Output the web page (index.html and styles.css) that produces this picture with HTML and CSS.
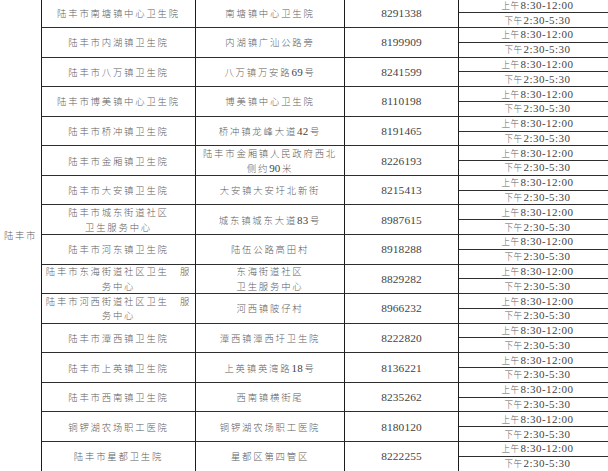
FILE: index.html
```html
<!DOCTYPE html>
<html lang="zh-CN">
<head>
<meta charset="utf-8">
<title>陆丰市卫生院</title>
<link rel="stylesheet" href="styles.css">
</head>
<body>
<div class="sheet">
  <div class="cell city"><span class="t">陆丰市</span></div>

  <div class="cell name"><span class="t">陆丰市南塘镇中心卫生院</span></div>
  <div class="cell addr"><span class="t">南塘镇中心卫生院</span></div>
  <div class="cell tel"><span class="t">8291338</span></div>
  <div class="cell am"><span class="t"><span class="cn">上午</span>8:30-12:00</span></div>
  <div class="cell pm"><span class="t"><span class="cn">下午</span>2:30-5:30</span></div>

  <div class="cell name"><span class="t">陆丰市内湖镇卫生院</span></div>
  <div class="cell addr"><span class="t">内湖镇广汕公路旁</span></div>
  <div class="cell tel"><span class="t">8199909</span></div>
  <div class="cell am"><span class="t"><span class="cn">上午</span>8:30-12:00</span></div>
  <div class="cell pm"><span class="t"><span class="cn">下午</span>2:30-5:30</span></div>

  <div class="cell name"><span class="t">陆丰市八万镇卫生院</span></div>
  <div class="cell addr"><span class="t">八万镇万安路<span class="num">69</span>号</span></div>
  <div class="cell tel"><span class="t">8241599</span></div>
  <div class="cell am"><span class="t"><span class="cn">上午</span>8:30-12:00</span></div>
  <div class="cell pm"><span class="t"><span class="cn">下午</span>2:30-5:30</span></div>

  <div class="cell name"><span class="t">陆丰市博美镇中心卫生院</span></div>
  <div class="cell addr"><span class="t">博美镇中心卫生院</span></div>
  <div class="cell tel"><span class="t">8110198</span></div>
  <div class="cell am"><span class="t"><span class="cn">上午</span>8:30-12:00</span></div>
  <div class="cell pm"><span class="t"><span class="cn">下午</span>2:30-5:30</span></div>

  <div class="cell name"><span class="t">陆丰市桥冲镇卫生院</span></div>
  <div class="cell addr"><span class="t">桥冲镇龙峰大道<span class="num">42</span>号</span></div>
  <div class="cell tel"><span class="t">8191465</span></div>
  <div class="cell am"><span class="t"><span class="cn">上午</span>8:30-12:00</span></div>
  <div class="cell pm"><span class="t"><span class="cn">下午</span>2:30-5:30</span></div>

  <div class="cell name"><span class="t">陆丰市金厢镇卫生院</span></div>
  <div class="cell addr"><span class="t two">陆丰市金厢镇人民政府西北<br>侧约<span class="num">90</span>米</span></div>
  <div class="cell tel"><span class="t">8226193</span></div>
  <div class="cell am"><span class="t"><span class="cn">上午</span>8:30-12:00</span></div>
  <div class="cell pm"><span class="t"><span class="cn">下午</span>2:30-5:30</span></div>

  <div class="cell name"><span class="t">陆丰市大安镇卫生院</span></div>
  <div class="cell addr"><span class="t">大安镇大安圩北新街</span></div>
  <div class="cell tel"><span class="t">8215413</span></div>
  <div class="cell am"><span class="t"><span class="cn">上午</span>8:30-12:00</span></div>
  <div class="cell pm"><span class="t"><span class="cn">下午</span>2:30-5:30</span></div>

  <div class="cell name"><span class="t two">陆丰市城东街道社区<br>卫生服务中心</span></div>
  <div class="cell addr"><span class="t">城东镇城东大道<span class="num">83</span>号</span></div>
  <div class="cell tel"><span class="t">8987615</span></div>
  <div class="cell am"><span class="t"><span class="cn">上午</span>8:30-12:00</span></div>
  <div class="cell pm"><span class="t"><span class="cn">下午</span>2:30-5:30</span></div>

  <div class="cell name"><span class="t">陆丰市河东镇卫生院</span></div>
  <div class="cell addr"><span class="t">陆伍公路高田村</span></div>
  <div class="cell tel"><span class="t">8918288</span></div>
  <div class="cell am"><span class="t"><span class="cn">上午</span>8:30-12:00</span></div>
  <div class="cell pm"><span class="t"><span class="cn">下午</span>2:30-5:30</span></div>

  <div class="cell name"><span class="t two">陆丰市东海街道社区卫生　服<br>务中心</span></div>
  <div class="cell addr"><span class="t two">东海街道社区<br>卫生服务中心</span></div>
  <div class="cell tel"><span class="t">8829282</span></div>
  <div class="cell am"><span class="t"><span class="cn">上午</span>8:30-12:00</span></div>
  <div class="cell pm"><span class="t"><span class="cn">下午</span>2:30-5:30</span></div>

  <div class="cell name"><span class="t two">陆丰市河西街道社区卫生　服<br>务中心</span></div>
  <div class="cell addr"><span class="t">河西镇陂仔村</span></div>
  <div class="cell tel"><span class="t">8966232</span></div>
  <div class="cell am"><span class="t"><span class="cn">上午</span>8:30-12:00</span></div>
  <div class="cell pm"><span class="t"><span class="cn">下午</span>2:30-5:30</span></div>

  <div class="cell name"><span class="t">陆丰市潭西镇卫生院</span></div>
  <div class="cell addr"><span class="t">潭西镇潭西圩卫生院</span></div>
  <div class="cell tel"><span class="t">8222820</span></div>
  <div class="cell am"><span class="t"><span class="cn">上午</span>8:30-12:00</span></div>
  <div class="cell pm"><span class="t"><span class="cn">下午</span>2:30-5:30</span></div>

  <div class="cell name"><span class="t">陆丰市上英镇卫生院</span></div>
  <div class="cell addr"><span class="t">上英镇英湾路<span class="num">18</span>号</span></div>
  <div class="cell tel"><span class="t">8136221</span></div>
  <div class="cell am"><span class="t"><span class="cn">上午</span>8:30-12:00</span></div>
  <div class="cell pm"><span class="t"><span class="cn">下午</span>2:30-5:30</span></div>

  <div class="cell name"><span class="t">陆丰市西南镇卫生院</span></div>
  <div class="cell addr"><span class="t">西南镇横街尾</span></div>
  <div class="cell tel"><span class="t">8235262</span></div>
  <div class="cell am"><span class="t"><span class="cn">上午</span>8:30-12:00</span></div>
  <div class="cell pm"><span class="t"><span class="cn">下午</span>2:30-5:30</span></div>

  <div class="cell name"><span class="t">铜锣湖农场职工医院</span></div>
  <div class="cell addr"><span class="t">铜锣湖农场职工医院</span></div>
  <div class="cell tel"><span class="t">8180120</span></div>
  <div class="cell am"><span class="t"><span class="cn">上午</span>8:30-12:00</span></div>
  <div class="cell pm"><span class="t"><span class="cn">下午</span>2:30-5:30</span></div>

  <div class="cell name"><span class="t">陆丰市星都卫生院</span></div>
  <div class="cell addr"><span class="t">星都区第四管区</span></div>
  <div class="cell tel"><span class="t">8222255</span></div>
  <div class="cell am"><span class="t"><span class="cn">上午</span>8:30-12:00</span></div>
  <div class="cell pm"><span class="t"><span class="cn">下午</span>2:30-5:30</span></div>
</div>
</body>
</html>
```
FILE: styles.css
```css
html, body {
  margin: 0;
  padding: 0;
  background: #ffffff;
  overflow: hidden;
}

.sheet {
  display: grid;
  grid-template-columns: 42px 154px 149px 114px 155px;
  grid-template-rows: repeat(32, 14.785px);
  grid-auto-flow: column dense;
  margin-top: -1.5px;
  width: 614px;
}

.cell {
  box-sizing: border-box;
  display: flex;
  align-items: center;
  justify-content: center;
  text-align: center;
  border-right: 1px solid #1c1c1c;
  border-bottom: 1px solid #2e2e2e;
  color: #606060;
  font-family: "Noto Sans CJK SC", "Noto Sans", sans-serif;
  font-weight: 300;
  font-size: 9.4px;
  letter-spacing: 1.8px;
  line-height: 14px;
  white-space: nowrap;
  overflow: hidden;
}

.t {
  display: block;
}

.city {
  grid-column: 1;
  grid-row: 1 / span 32;
  border-bottom: none;
  letter-spacing: 1.6px;
}

.name {
  grid-column: 2;
  grid-row: span 2;
}

.addr {
  grid-column: 3;
  grid-row: span 2;
}

.tel {
  grid-column: 4;
  grid-row: span 2;
  font-family: "Liberation Serif", "DejaVu Serif", serif;
  font-weight: 400;
  font-size: 11.4px;
  letter-spacing: 0.1px;
  color: #444444;
}

.am, .pm {
  grid-column: 5;
  grid-row: span 1;
  font-family: "Liberation Serif", "DejaVu Serif", serif;
  font-weight: 400;
  font-size: 11px;
  letter-spacing: 0.45px;
  color: #444444;
  line-height: 13px;
  padding-left: 3px;
}

.cn {
  font-family: "Noto Sans CJK SC", sans-serif;
  font-weight: 300;
  font-size: 8.6px;
  letter-spacing: 0.4px;
  color: #606060;
  margin-right: 1px;
}

.num {
  font-family: "Liberation Serif", "DejaVu Serif", serif;
  font-weight: 400;
  font-size: 11px;
  letter-spacing: 0.2px;
  margin-right: 1.5px;
  color: #444444;
}

.two {
  line-height: 14.5px;
}
```
